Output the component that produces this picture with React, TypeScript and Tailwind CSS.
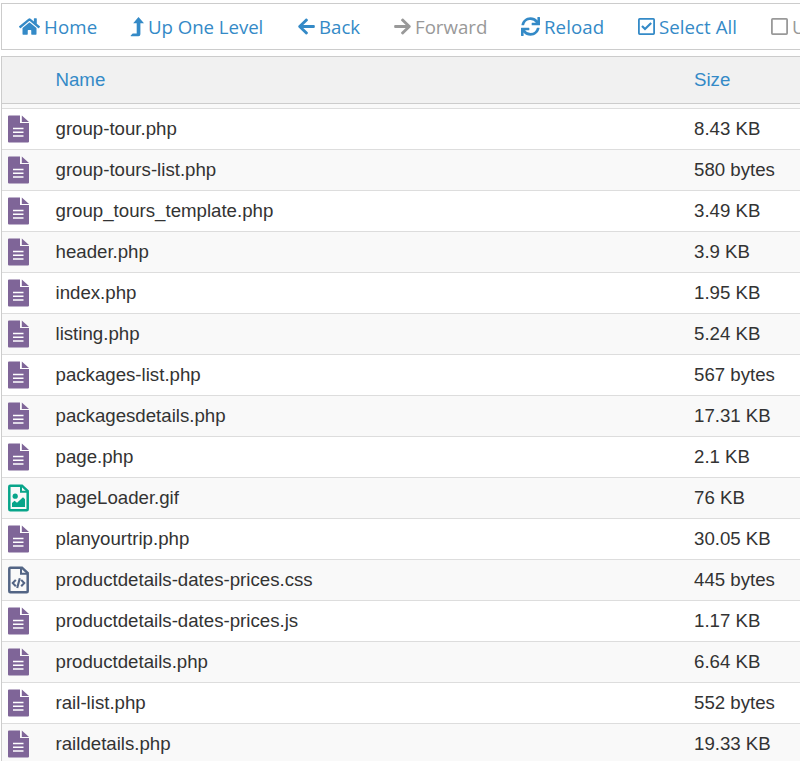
import type { ReactNode } from "react";
import { FaHome, FaSync, FaArrowLeft, FaArrowRight } from "react-icons/fa";

type Kind = "doc" | "image" | "code";
const files: [string, string, Kind][] = [
  ["group-tour.php", "8.43 KB", "doc"],
  ["group-tours-list.php", "580 bytes", "doc"],
  ["group_tours_template.php", "3.49 KB", "doc"],
  ["header.php", "3.9 KB", "doc"],
  ["index.php", "1.95 KB", "doc"],
  ["listing.php", "5.24 KB", "doc"],
  ["packages-list.php", "567 bytes", "doc"],
  ["packagesdetails.php", "17.31 KB", "doc"],
  ["page.php", "2.1 KB", "doc"],
  ["pageLoader.gif", "76 KB", "image"],
  ["planyourtrip.php", "30.05 KB", "doc"],
  ["productdetails-dates-prices.css", "445 bytes", "code"],
  ["productdetails-dates-prices.js", "1.17 KB", "doc"],
  ["productdetails.php", "6.64 KB", "doc"],
  ["rail-list.php", "552 bytes", "doc"],
  ["raildetails.php", "19.33 KB", "doc"],
];

function FileIcon({ kind }: { kind: Kind }) {
  if (kind === "doc") {
    return (
      <svg width="21" height="28" viewBox="0 0 21 28" fill="#7f6598">
        <path d="M1 0.5H12V8H21V26.5Q21 27.5 20 27.5H1Q0 27.5 0 26.5V1.5Q0 .5 1 .5Z" />
        <path d="M13.8 .5L21 6.9H13.8Z" />
        <path d="M5 13.5H15.5M5 17.2H15.5M5 21H15.5" stroke="#fff" strokeWidth="1.6" />
      </svg>
    );
  }
  return (
    <svg
      width="21"
      height="28"
      viewBox="0 0 21 28"
      fill="none"
      stroke={kind === "image" ? "#08a58a" : "#536585"}
      strokeWidth="2.5"
    >
      <path d="M2.2 1.7H14L19.7 7V25.2Q19.7 26.3 18.7 26.3H2.3Q1.3 26.3 1.3 25.2V2.7Q1.3 1.7 2.2 1.7Z" />
      <path d="M13 2V7.8H19" strokeWidth="2" />
      {kind === "image" ? (
        <g fill="#08a58a" stroke="none">
          <circle cx="7.2" cy="12.2" r="2.6" />
          <path d="M4 22.9V19.1L6.5 16.8L9 18.7L15 13.2L17 15.2V22.9Z" />
        </g>
      ) : (
        <path d="M7.8 13.9L4.8 17.1L7.8 20.3M13.2 13.9L16.2 17.1L13.2 20.3M11.8 12.2L9.2 21.9" strokeWidth="2.1" />
      )}
    </svg>
  );
}

function Checkbox({ checked }: { checked?: boolean }) {
  return (
    <svg width="17" height="17" viewBox="0 0 17 17" fill="none" stroke="currentColor">
      <rect x=".9" y=".9" width="15.2" height="15.2" rx=".8" strokeWidth="1.8" />
      {checked && <path d="M4 8L7 11L13.2 5" strokeWidth="2.2" />}
    </svg>
  );
}

function Tool({ icon, label, place, disabled }: { icon: ReactNode; label: string; place: string; disabled?: boolean }) {
  return (
    <button className={`flex shrink-0 items-center whitespace-nowrap ${place} ${disabled ? "text-[#999]" : "text-[#348ac7]"}`}>
      {icon}
      <span>{label}</span>
    </button>
  );
}

export default function App() {
  return (
    <div className="h-[761px] w-[800px] overflow-hidden bg-white pl-px pt-[3px] font-['Liberation_Sans',Arial,sans-serif] text-[18.67px] text-[#333]">
      <div className="flex h-[47px] w-[840px] border border-[#ccc] font-['Open_Sans',sans-serif] text-[18.67px]">
        <Tool place="ml-[17px] w-[111px] gap-[4px] tracking-[0.15px]" icon={<FaHome className="h-[21px] w-[21px]" />} label="Home" />
        <Tool
          place="w-[167px] gap-[4px] tracking-[-0.05px]"
          icon={
            <svg width="14" height="20" viewBox="0 0 14 20" fill="currentColor">
              <path d="M8.5 0L14 6.3H10.4V17.2Q10.4 19.3 8.4 19.3H1Q.2 19.3 .8 18.5L2.7 16.4H6.7V6.3H3.2Z" />
            </svg>
          }
          label="Up One Level"
        />
        <Tool place="w-[96px] gap-[3px]" icon={<FaArrowLeft className="h-[19px] w-[19px]" />} label="Back" />
        <Tool place="w-[128px] gap-[3px]" disabled icon={<FaArrowRight className="h-[19px] w-[19px]" />} label="Forward" />
        <Tool place="w-[117px] gap-[4px] tracking-[0.08px]" icon={<FaSync className="h-[19px] w-[19px]" />} label="Reload" />
        <Tool place="w-[133px] gap-[4px] tracking-[0.05px]" icon={<Checkbox checked />} label="Select All" />
        <Tool place="gap-[4px]" disabled icon={<Checkbox />} label="U" />
      </div>
      <div className="mt-[6px] w-[840px] border-l border-t border-[#ccc]">
        <div className="flex h-[47px] items-center border-b border-[#ccc] bg-[#f1f1f1] text-[#348ac7]">
          <span className="ml-[53.5px] w-[638.5px]">Name</span>
          <span>Size</span>
        </div>
        <div className="h-[4px] bg-[#f9f9f9]" />
        {files.map(([name, size, kind]) => (
          <div key={name} className="flex h-[41px] items-center border-t border-[#ddd] even:bg-[#f9f9f9]">
            <span className="ml-[6px] w-[47.5px]"><FileIcon kind={kind} /></span>
            <span className="w-[638.5px]">{name}</span>
            <span>{size}</span>
          </div>
        ))}
      </div>
    </div>
  );
}
